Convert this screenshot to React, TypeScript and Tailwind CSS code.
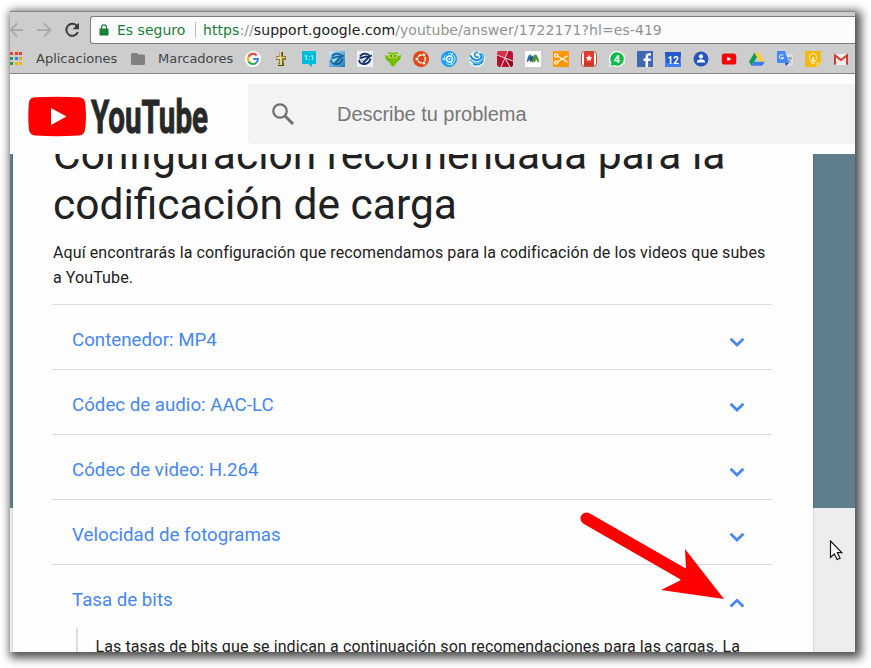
import React from "react";

const Icon = ({ children }: { children: React.ReactNode }) => (
  <svg viewBox="0 0 16 16" className="h-4 w-4 shrink-0">
    {children}
  </svg>
);

const svgFont = "'Roboto', 'Liberation Sans', sans-serif";

const bookmarks: React.ReactNode[] = [
  <>
    <circle cx="8" cy="8" r="8" fill="#fff" />
    <g fill="none" strokeWidth="2.1">
      <path d="M11.7 4.3A5 5 0 0 0 3.5 5.8" stroke="#ea4335" />
      <path d="M3.5 5.8a5 5 0 0 0 0 4.4" stroke="#fbbc05" />
      <path d="M3.5 10.2a5 5 0 0 0 7.8 1.6" stroke="#34a853" />
      <path d="M11.3 11.8A5 5 0 0 0 13 8H8.2" stroke="#4285f4" />
    </g>
  </>,
  <>
    <path d="M6 1h4v4h3v4h-3v3h1v3H5v-3h1V9H3V5h3z" fill="#8b7b3c" />
    <path d="M6.500 1H8v5h4v1H9v7H6v-1h1V8H3.500V6h3z" fill="#e5d78c" />
    <path d="M9.500 1v4M10 9v5M5.500 14.500h5" stroke="#514514" fill="none" />
  </>,
  <>
    <path d="M1 0h14v13h-4v3l-4-3H1z" fill="#00bcdc" />
    <text x="8" y="9.300" fontSize="7.500" textAnchor="middle" fill="#a6efff" fontFamily={svgFont} fontWeight="700">1:1</text>
  </>,
  <>
    <defs>
      <linearGradient id="skyBlue" x1="0" y1="0" x2="1" y2="1">
        <stop stopColor="#d8eff8" />
        <stop offset=".5" stopColor="#63b1d8" />
        <stop offset="1" stopColor="#217bb4" />
      </linearGradient>
    </defs>
    <path d="M0 0h16v16H0z" fill="url(#skyBlue)" />
    <g fill="none" stroke="#135d9b">
      <path d="M3 5.500C5 2 10 1.500 13 5M2 9c.5 3 3 4.500 6 4 3-.5 5-3 5.500-5.500" strokeWidth="1.800" />
      <path d="M2.500 7.300 9 5.500l3 .5L6 12M11 6l4-1.500" strokeWidth="1.600" />
    </g>
    <path d="m3 9.500 5-2.500-4 5z" fill="#a8ddf1" />
  </>,
  <>
    <path d="M0 0h16v16H0z" fill="#eef2f6" />
    <g fill="none" stroke="#102f65">
      <path d="M3 5.500C5 2 10 1.500 13 5M2 9c.5 3 3 4.500 6 4 3-.5 5-3 5.500-5.500" strokeWidth="1.800" />
      <path d="M2.500 7.300 9 5.500l3 .5L6 12M11 6l4-1.500" strokeWidth="1.800" />
    </g>
    <path d="m3 9.500 5-2.500-4 5z" fill="#a9bfdc" />
  </>,
  <>
    <path d="M3.500 1C5 1 6 2 8 2s3-1 4.500-1v4.500L16 4c0 4-1.500 6-4 7-1 2-2 3-4 5-2-2-3-3-4-5-2.500-1-4-3-4-7l3.500 1.500z" fill="#76bd00" />
    <circle cx="5.700" cy="5" r="2.300" fill="#b5e35a" />
    <circle cx="10.300" cy="5" r="2.300" fill="#b5e35a" />
    <circle cx="6" cy="5" r=".9" fill="#3d5e13" />
    <circle cx="10" cy="5" r=".9" fill="#3d5e13" />
    <path d="m6.800 6.500 1.200 2 1.300-2z" fill="#f59c00" />
  </>,
  <>
    <circle cx="8" cy="8" r="8" fill="#dd4814" />
    <circle cx="8.500" cy="8" r="3.900" fill="none" stroke="#fff" strokeWidth="1.500" />
    <g fill="#fff" stroke="#dd4814" strokeWidth=".8">
      <circle cx="3.800" cy="8" r="1.800" />
      <circle cx="10.900" cy="3.800" r="1.800" />
      <circle cx="10.900" cy="12.200" r="1.800" />
    </g>
  </>,
  <>
    <circle cx="8" cy="8" r="8" fill="#149cff" />
    <circle cx="8.500" cy="8" r="5.500" fill="none" stroke="#d7f0ff" strokeDasharray="12 3 6 3" />
    <circle cx="8.500" cy="8" r="3" fill="none" stroke="#fff" strokeWidth="1.400" />
    <path d="M1 8h4M12 2l-2 3M12 14l-2-3" stroke="#e6f5ff" />
    <circle cx="8.500" cy="8" r="1" fill="#fff" />
  </>,
  <>
    <circle cx="8" cy="8" r="8" fill="#f4faff" />
    <g fill="none" strokeLinecap="round">
      <path d="M1.500 5c2.500 4.500 6.500 5 9.500 3 2-1.500 2-4 0-5" stroke="#168bd0" strokeWidth="2" />
      <path d="M1.500 9c3 4 8 4 11 1 2.500-2.500 2-5 .5-7" stroke="#50b7e8" strokeWidth="2" />
      <path d="M4.500 13c4 2 8 0 9.500-3" stroke="#168bd0" strokeWidth="1.500" />
      <path d="M8.500 1.500C4.500 1 4.500 6.500 9 6" stroke="#2c9bd8" strokeWidth="1.800" />
    </g>
  </>,
  <>
    <rect width="16" height="16" rx="3" fill="#b70f2d" />
    <path d="M0 3c0-2 1-3 3-3h8L8 7z" fill="#d9304a" />
    <path d="M8 7 16 10v3c0 2-1 3-3 3z" fill="#8d071c" />
    <path d="m0 4 16 6M11 0 4 16M8 7l5 9" stroke="#f0c0c8" strokeWidth="1.100" />
  </>,
  <>
    <path d="M0 0h16v16H0z" fill="#fff" />
    <path d="M1.500 11.500C2.500 7.500 3 4 5 3.500c2 .5 2 4 1 8L4.500 9z" fill="#2c6cad" />
    <path d="m4.500 10 2.500-6 3 5-2.500 2.500L6 9.500z" fill="#234f78" />
    <path d="M6.500 11.500C7.500 7 8.500 4 10.500 3.500c2 .5 3 4 4 8-1.500 0-2.500-1-3-3l-2 3-1-1.500z" fill="#51933c" />
  </>,
  <>
    <path d="M0 0h16v16H0z" fill="#ff9800" />
    <g fill="none" stroke="#fff" strokeWidth="1.200">
      <circle cx="3.300" cy="4.400" r="1.600" />
      <circle cx="3.300" cy="11.600" r="1.600" />
      <path d="m4.700 5.300 9.800 5.900M4.700 10.700l9.800-5.900" />
    </g>
  </>,
  <>
    <rect x=".5" y=".5" width="15" height="15" rx="3" fill="#fff" stroke="#b84c37" />
    <path d="M3 1h10v14H3z" fill="#e23b29" />
    <path d="m8 3.800 1 2.100 2.300.3-1.700 1.600.4 2.300-2-1.100-2 1.100.4-2.300-1.700-1.600L7 5.900z" fill="#fff" />
    <path d="M3 13h10" stroke="#a62c22" />
  </>,
  <>
    <path d="M8 0a8 8 0 1 1-3.400 15L0 16l1-4A8 8 0 0 1 8 0z" fill="#fff" />
    <path d="M8 1.200a6.800 6.800 0 1 1-3 12.900l-3.400.7.800-3.200A6.800 6.800 0 0 1 8 1.200z" fill="#08bf45" />
    <text x="8" y="12" fontSize="11" textAnchor="middle" fill="#fff" fontFamily={svgFont} fontWeight="700">4</text>
  </>,
  <>
    <path d="M0 0h16v16H0z" fill="#4267b2" />
    <path d="M8.500 16v-6h-2V7.500h2V6c0-2.500 1.200-3.700 3.500-3.700h2v2.300h-1.500c-1 0-1.400.4-1.400 1.400v1.500h2.800l-.4 2.500h-2.400v6z" fill="#fff" />
  </>,
  <>
    <path d="M0 1h16v3l-.5 5 .5 7H0l.5-7L0 4z" fill="#2558c8" />
    <path d="M0 12h16v4H0z" fill="#3e7ef2" />
    <text x="8" y="13" fontSize="10" textAnchor="middle" fill="#fff" fontFamily={svgFont} fontWeight="700">12</text>
  </>,
  <>
    <circle cx="8" cy="8" r="7.500" fill="#2855bd" />
    <circle cx="8" cy="5.400" r="2.100" fill="#fff" />
    <path d="M3.800 11.500c0-4.200 8.400-4.200 8.400 0z" fill="#fff" />
  </>,
  <>
    <rect x=".8" y="2.400" width="14.400" height="11.200" rx="2.600" fill="red" />
    <path d="m6.200 5.700 4.300 2.300-4.300 2.300z" fill="#fff" />
  </>,
  <>
    <path d="M5.500 1.500 0 10.800l2.600 4L8.200 6z" fill="#0c9d58" />
    <path d="M5.500 1.500h5l5.300 9.300h-5.200z" fill="#ffcd40" />
    <path d="M5.200 10.800h10.600l-2.600 4H2.600z" fill="#3e79ed" />
  </>,
  <>
    <path d="M7 3h8q1 0 1 1v10q0 1-1 1h-5z" fill="#dce0e5" />
    <path d="M0 0h8l4 12H1q-1 0-1-1z" fill="#4388f4" />
    <path d="M8 12h4l-3 3z" fill="#2851ac" />
    <path d="M6.200 4.600a2.100 2.100 0 1 0 .3 2H4.600" fill="none" stroke="#fff" />
    <path d="M10 7h5M12.500 6v1M14 7c0 2-2 4-3 5M11 8c0 2 2 3 3 4" fill="none" stroke="#718693" strokeWidth=".9" />
  </>,
  <>
    <path d="M0 0h16v12l-4 4H0z" fill="#f5b811" />
    <path d="M11.500 11.500H16L11.500 16z" fill="#ffd85a" />
    <path d="M5.900 9.500C3.100 7.500 4.100 2.500 8 2.500s4.900 5 2.100 7v1.200H5.900zM6.300 12.500h3.400M7.300 10V6.300L8 7l.7-.7V10" fill="none" stroke="#fff3c4" />
  </>,
  <>
    <path d="M1 3h14v11H1z" fill="#f0f0f0" />
    <path d="m2 13 5-5M14 13 9 8" stroke="#ccc" />
    <path d="M2 13.700V4.400L8 9l6-4.600v9.300" fill="none" stroke="#d43c2f" strokeWidth="2" />
  </>,
];

const appDots = [
  ["#ee3e32", "#ee3e32", "#ee3e32"],
  ["#249b51", "#2185f7", "#efa51d"],
  ["#249b51", "#f2b400", "#f2b400"],
];

const Chevron = ({ up = false }: { up?: boolean }) => (
  <svg viewBox="0 0 16 12" className={up ? "mt-1.5 h-3 w-4" : "mt-1 h-3 w-4"}>
    <path
      d={up ? "M1.600 9.500 8 3.300l6.400 6.200" : "M1.600 2.800 8 9l6.400-6.200"}
      fill="none"
      stroke="#4587f3"
      strokeWidth="2.700"
    />
  </svg>
);

const sections = ["Contenedor: MP4", "Códec de audio: AAC-LC", "Códec de video: H.264", "Velocidad de fotogramas", "Tasa de bits"];

function Toolbar() {
  return (
    <div className="h-[63px] border-y border-[#858585] bg-[#cdcdcd] pt-1 font-['DejaVu_Sans',sans-serif]">
      <div className="flex h-7 items-center">
        <svg viewBox="0 0 80 28" className="h-7 w-20 shrink-0">
          <g fill="none" stroke="#aaa" strokeWidth="1.800">
            <path d="M13 14H1M7 7.500.5 14 7 20.500M27 14h13M34 7.500l6.500 6.500-6.500 6.500" />
          </g>
          <path d="M67.200 10.200a6 6 0 1 0 .7 6" fill="none" stroke="#3b3b3b" strokeWidth="2" />
          <path d="M69 6.800v6.400h-6.400z" fill="#3b3b3b" />
        </svg>
        <div className="flex h-7 flex-1 items-center rounded-l-[3px] border border-r-0 border-[#7d7d7d] bg-[#fcfcfc] text-sm">
          <svg viewBox="0 0 10 12" className="ml-2 h-3 w-[10px]">
            <path d="M1 4.500h8q.5 0 .5.5v6q0 .5-.5.5H1q-.5 0-.5-.5V5q0-.5.5-.5z" fill="#188038" />
            <path d="M2.500 5V3.300a2.500 2.500 0 0 1 5 0V5" fill="none" stroke="#188038" strokeWidth="1.200" />
          </svg>
          <span className="ml-[8px] w-[69px] whitespace-nowrap text-[#188038]">Es seguro</span>
          <span className="ml-[9px] mr-[7px] h-4 w-px bg-[#bbb]" />
          <span className="whitespace-nowrap tracking-[0.075px] text-[#929292]">
            <span className="text-[#188038]">https</span>://<span className="text-[#222]">support.google.com</span>/youtube/answer/1722171?hl=es-419
          </span>
        </div>
      </div>
      <div className="flex h-[29px] items-center text-[13px] text-[#444]">
        <div className="grid w-3 grid-cols-3 gap-x-[2px] gap-y-[2px]">
          {appDots.flat().map((color, i) => (
            <span key={i} className="h-[3px] w-[3px]" style={{ background: color }} />
          ))}
        </div>
        <span className="ml-[14px] w-[95px] whitespace-nowrap">Aplicaciones</span>
        <svg viewBox="0 0 14 12" className="h-3 w-[14px]">
          <path d="M1.300 0H6l1.400 1.600h5.300q1.300 0 1.300 1.300v7.800q0 1.300-1.300 1.300H1.300Q0 12 0 10.700V1.300Q0 0 1.300 0z" fill="#808080" />
        </svg>
        <span className="ml-[13px] w-[87px] whitespace-nowrap">Marcadores</span>
        <div className="flex gap-3">
          {bookmarks.map((b, i) => (
            <Icon key={i}>{b}</Icon>
          ))}
        </div>
      </div>
    </div>
  );
}

export default function App() {
  return (
    <div className="relative h-[668px] w-[871px] overflow-hidden bg-white pl-[10px] pt-[11px] font-['Roboto',sans-serif]">
      <div className="h-[641px] w-[845px] shadow-[3px_3px_9px_3px_rgba(0,0,0,0.7)]">
        <div className="flex h-full flex-col overflow-hidden bg-[#fefefe]">
          <Toolbar />
          <header className="flex h-20 shrink-0 items-start pl-[18px] pt-[10px]">
            <svg viewBox="0 0 182 60" className="h-[60px] w-[182px] shrink-0">
              <path d="M7 13.300Q29 12 51 13.300Q56 13.600 57 18Q59 33 57 46Q56 51 51 51.500Q29 53 7 51.500Q2 51 1 46Q-.5 33 1 18Q2 13.600 7 13.300z" fill="red" />
              <path d="m23 24 15.500 8.500L23 41z" fill="#fff" />
              <text x="63" y="49" fontSize="46" fontWeight="700" fontFamily={svgFont} textLength="117" lengthAdjust="spacingAndGlyphs" fill="#282828" stroke="#282828" strokeWidth="1">YouTube</text>
            </svg>
            <div className="ml-[38px] flex h-[60px] flex-1 items-center rounded-l-[4px] bg-[#f3f3f3]">
              <svg viewBox="0 0 24 24" className="ml-[23px] h-6 w-6">
                <circle cx="9" cy="9" r="6.700" fill="none" stroke="#707070" strokeWidth="2.300" />
                <path d="m14 14 8 8" stroke="#707070" strokeWidth="3" />
              </svg>
              <span className="ml-[42px] font-['Liberation_Sans',sans-serif] text-xl tracking-[-0.03px] text-[#777]">Describe tu problema</span>
            </div>
          </header>
          <div className="flex flex-1 overflow-hidden bg-[linear-gradient(#5f7d8b_354px,#ededed_354px)] pl-[3px]">
            <main className="h-[498px] w-[800px] overflow-hidden bg-[#fefefe] pl-[39px] shadow-[0_0_2px_rgba(0,0,0,0.25)]">
              <h1 className="-mt-6 h-[105px] whitespace-nowrap pl-px text-[42.500px] leading-[50px] text-[#212121]">
                Configuración recomendada para la<br />codificación de carga
              </h1>
              <p className="h-[69px] whitespace-nowrap pl-px pt-[5px] text-base leading-[25px] tracking-[0.1px] text-[#212121]">
                Aquí encontrarás la configuración que recomendamos para la codificación de los videos que subes<br />a YouTube.
              </p>
              {sections.map((title, i) => (
                <section key={title} className="flex h-[65px] w-[720px] items-center justify-between border-t border-[#dcdcdc] pl-5 pr-[27px] pt-[6px]">
                  <h2 className="text-[18.720px] leading-6 text-[#4587f3]">{title}</h2>
                  <Chevron up={i === 4} />
                </section>
              ))}
              <div className="-mt-px ml-6 border-l-2 border-[#dcdcdc] pl-[17.500px] pt-[6px]">
                <p className="whitespace-nowrap text-base leading-[25px] tracking-[0.105px] text-[#212121]">Las tasas de bits que se indican a continuación son recomendaciones para las cargas. La</p>
              </div>
            </main>
          </div>
        </div>
      </div>
      <svg viewBox="0 0 146 92" className="absolute left-[579px] top-[510px] h-[92px] w-[146px]">
        <path d="M7.500 8.500 106 65" stroke="red" strokeWidth="12" strokeLinecap="round" />
        <path d="M106 39 145 89 82 80 101 70.500 107 59z" fill="red" />
      </svg>
      <svg viewBox="0 0 15 22" className="absolute left-[829px] top-[540px] h-[22px] w-[15px]">
        <path d="M1.500 1v16.500l3.800-3.500 2.800 5.500 3-1.300-2.800-5.500h4.500z" fill="#fff" stroke="#151515" strokeWidth="1.200" />
      </svg>
    </div>
  );
}
